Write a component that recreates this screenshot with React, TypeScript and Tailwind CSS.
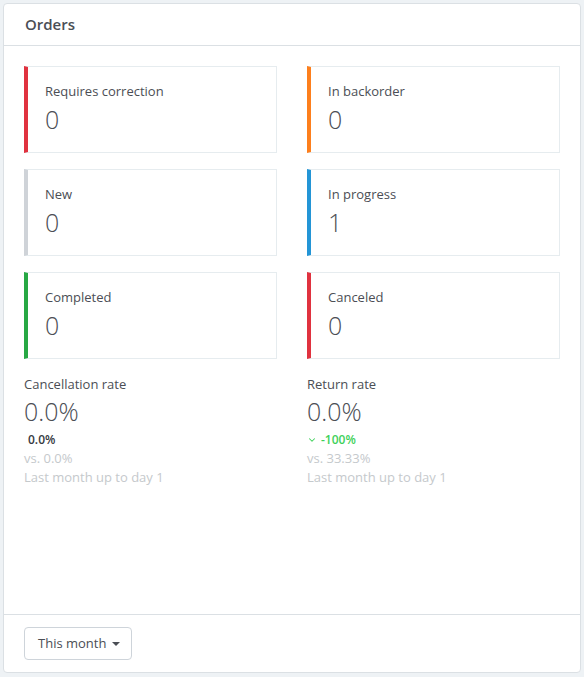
import { ChevronDown } from "lucide-react";

type Tile = {
  label: string;
  value: string;
  bar: string;
};

const tiles: Tile[] = [
  { label: "Requires correction", value: "0", bar: "border-l-[#e0323f]" },
  { label: "In backorder", value: "0", bar: "border-l-[#fd7f1d]" },
  { label: "New", value: "0", bar: "border-l-[#cfd3d8]" },
  { label: "In progress", value: "1", bar: "border-l-[#2395d6]" },
  { label: "Completed", value: "0", bar: "border-l-[#27a844]" },
  { label: "Canceled", value: "0", bar: "border-l-[#e0323f]" },
];

const StatusTile = ({ label, value, bar }: Tile) => {
  return (
    <div
      className={
        "h-[87px] border border-[#e6ecef] border-l-4 pl-[17px] pt-[14px] " + bar
      }
    >
      <div className="text-[13px] leading-[20px] text-[#4b4e55]">{label}</div>
      <div className="mt-[1px] text-[25px] leading-[34px] font-light text-[#4b4e55]">
        {value}
      </div>
    </div>
  );
};

type RateProps = {
  title: string;
  value: string;
  delta: string;
  positive?: boolean;
  previous: string;
};

const Rate = ({ title, value, delta, positive, previous }: RateProps) => {
  return (
    <div className="flex flex-col">
      <div className="text-[13px] leading-[20px] text-[#4b4e55]">{title}</div>
      <div className="text-[25px] leading-[34px] font-light text-[#4b4e55]">
        {value}
      </div>
      {positive ? (
        <div className="mt-[3px] flex items-center text-[12px] leading-[18px] font-semibold text-[#3ed15a]">
          <ChevronDown size={10} strokeWidth={2.5} className="mr-[4px]" />
          {delta}
        </div>
      ) : (
        <div className="mt-[3px] pl-[4px] text-[12px] leading-[18px] font-semibold text-[#363a41]">
          {delta}
        </div>
      )}
      <div className="text-[13px] leading-[18px] text-[#c5c9cc]">
        {previous}
      </div>
      <div className="mt-[1px] text-[13px] leading-[18px] text-[#c5c9cc]">
        Last month up to day 1
      </div>
    </div>
  );
};

export default function App() {
  return (
    <div
      className="min-h-[677px] bg-[#eef2f5] p-[3px]"
      style={{ fontFamily: '"Open Sans", "Noto Sans", sans-serif' }}
    >
      <div className="flex h-[670px] w-[578px] flex-col rounded-[4px] border border-[#dbe0e4] bg-white">
        <div className="flex h-[42px] items-center border-b border-[#dbe0e4] px-[21px]">
          <span className="text-[15px] font-semibold text-[#4b4e55]">
            Orders
          </span>
        </div>
        <div className="flex-1 px-[20px] pt-[20px]">
          <div className="grid grid-cols-2 gap-x-[30px] gap-y-[16px]">
            {tiles.map((t) => (
              <StatusTile key={t.label} {...t} />
            ))}
          </div>
          <div className="mt-[15px] grid grid-cols-2 gap-x-[30px]">
            <Rate
              title="Cancellation rate"
              value="0.0%"
              delta="0.0%"
              previous="vs. 0.0%"
            />
            <Rate
              title="Return rate"
              value="0.0%"
              delta="-100%"
              positive
              previous="vs. 33.33%"
            />
          </div>
        </div>
        <div className="h-[58px] border-t border-[#dbe0e4] px-[20px] pt-[12px]">
          <button className="flex h-[33px] items-center gap-[6px] rounded-[4px] border border-[#ced4da] pl-[13px] pr-[11px] text-[13px] text-[#4b4e55]">
            This month
            <span className="h-0 w-0 border-x-[4px] border-t-[4px] border-x-transparent border-t-[#4b4e55]" />
          </button>
        </div>
      </div>
    </div>
  );
}
